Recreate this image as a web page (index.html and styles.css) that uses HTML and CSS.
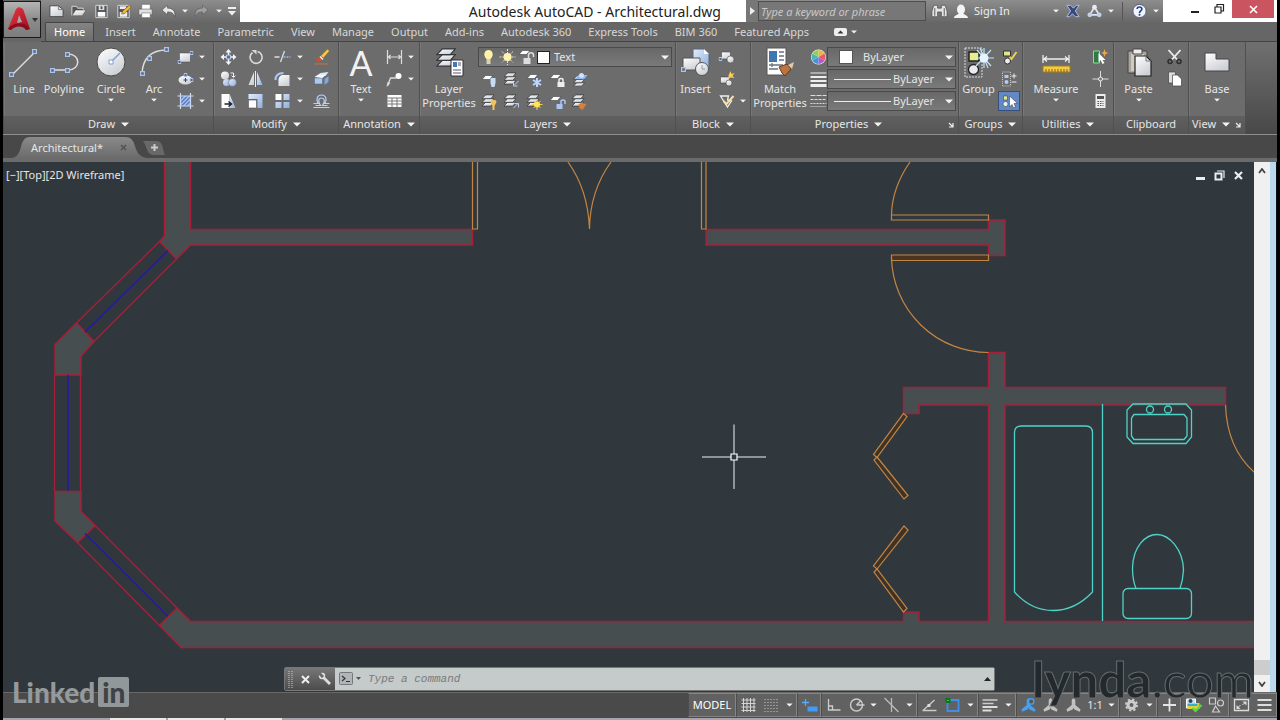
FILE: index.html
```html
<!DOCTYPE html>
<html lang="en">
<head>
<meta charset="utf-8">
<title>Autodesk AutoCAD - Architectural.dwg</title>
<link rel="stylesheet" href="styles.css">
</head>
<body>
<svg class="defs" aria-hidden="true">
  <defs>
    <linearGradient id="gw" x1="0" y1="0" x2="0.6" y2="1"><stop offset="0" stop-color="#fff"/><stop offset="1" stop-color="#cdd0d6"/></linearGradient>
    <linearGradient id="gb" x1="0" y1="0" x2="1" y2="1"><stop offset="0" stop-color="#e3edfb"/><stop offset="1" stop-color="#8eaede"/></linearGradient>
    <linearGradient id="gr" x1="0" y1="0" x2="1" y2="1"><stop offset="0" stop-color="#f0394a"/><stop offset="1" stop-color="#980d1c"/></linearGradient>
    <symbol id="caret" viewBox="0 0 8 5"><path d="M0 0.5h8L4 4.5z" fill="#f4f4f4"/></symbol>
    <symbol id="node" viewBox="0 0 4 4"><path d="M.5.5h3v3h-3z" fill="#5c6675" stroke="#a8c4f2"/></symbol>
    <symbol id="sheet" viewBox="0 0 12 5"><path d="M4 .5h7.500L8 4.500H.500z" fill="#fff" stroke="#3c3f44" stroke-width=".6"/></symbol>
    <symbol id="stack" viewBox="0 0 14 14"><g fill="url(#gw)" stroke="#34373c" stroke-width=".8"><path d="M4.500 9h9L10 13H.5z"/><path d="M4.500 5h9L10 9H.5z"/><path d="M4.500 1h9L10 5H.5z"/></g></symbol>
    <symbol id="scale" viewBox="0 0 18 18"><path d="M9 1l2 2v6l6 5-1 2.500-6-2.500-1-2-1 2-6 2.500L1 14l6-5V3z"/></symbol>
  </defs>
</svg>
<div class="app">
  <header class="top">
    <button class="app-menu" aria-label="Application menu">
      <svg width="34" height="30" viewBox="0 0 34 30"><path d="M3 24L11 4l3-2 4 2 7 20-4 1-3-5-5-1-5 2-2 4z" fill="url(#gr)"/><path d="M14 10l3 7-5 1z" fill="#a8a8a8"/><path d="M3 24c3-5 12-7 18-4l4 4-4 1c-4-5-11-4-15 0z" fill="#8c0c1a"/><path d="M27 13h6l-3 4z" fill="#333"/></svg>
    </button>
    <div class="titlebar">
      <div class="qat">
        <button aria-label="New"><svg class="i" viewBox="0 0 18 16"><path d="M2 2.500h9l5 4v7.500H2z" fill="url(#gw)" stroke="#444"/><path d="M11 2.500v4h5" fill="none" stroke="#777"/></svg></button>
        <button aria-label="Open"><svg class="i" viewBox="0 0 18 16"><path d="M2 13V3h5l1 2h6v3" fill="#555" stroke="#ddd"/><path d="M2 13l4-6h11l-4 6z" fill="url(#gw)" stroke="#444" stroke-width=".5"/></svg></button>
        <button aria-label="Save"><svg class="i" viewBox="0 0 18 16"><path d="M3 2h12v13H3z" fill="#52565c" stroke="#ddd"/><path d="M6 2h6v5H6z" fill="#ddd"/><path d="M5 9h8v5H5z" fill="#fff"/><path d="M8 3h2v3H8z" fill="#555"/></svg></button>
        <button aria-label="Save as"><svg class="i" viewBox="0 0 18 16"><path d="M3 2h12v13H3z" fill="#52565c" stroke="#ddd"/><path d="M5 3h7v3H5zM5 9h8v5H5z" fill="#eee"/><path d="M7 11l1-3 7-6 2 2-7 7z" fill="#f2b63c" stroke="#5b4312" stroke-width=".6"/></svg></button>
        <button aria-label="Plot"><svg class="i" viewBox="0 0 18 16"><path d="M5 1h9v6H5z" fill="#fff" stroke="#555" stroke-width=".5"/><path d="M2 6h14v6H2z" fill="#dfe1e4" stroke="#555" stroke-width=".6"/><path d="M5 10h9v5H5z" fill="#fff" stroke="#666" stroke-width=".6"/></svg></button>
        <button aria-label="Undo"><svg class="i" viewBox="0 0 18 16"><path d="M2 7l6-5v3c5 0 8 2 8 9-2-4-4-5-8-5v3z" fill="#e8e8e8" stroke="#444" stroke-width=".6"/></svg></button>
        <svg class="caret" viewBox="0 0 8 5"><use href="#caret"/></svg>
        <button aria-label="Redo"><svg class="i" viewBox="0 0 18 16"><path d="M16 7l-6-5v3c-5 0-8 2-8 9 2-4 4-5 8-5v3z" fill="#a0a0a0" stroke="#555" stroke-width=".6"/></svg></button>
        <svg class="caret" viewBox="0 0 8 5"><use href="#caret"/></svg>
        <button aria-label="Customize"><svg width="10" height="9" viewBox="0 0 10 9"><path d="M1 0h8v2H1zM1 4h8L5 8.500z" fill="#f0f0f0"/></svg></button>
      </div>
      <h1>Autodesk AutoCAD - Architectural.dwg</h1>
      <div class="info">
        <button class="expand" aria-label="Collapse search"><svg width="5" height="8" viewBox="0 0 5 8"><path d="M0 0l5 4-5 4z" fill="#eee"/></svg></button>
        <input class="search" type="text" placeholder="Type a keyword or phrase" aria-label="Search">
        <button aria-label="Find"><svg class="i" viewBox="0 0 18 16"><path d="M3 2h4v3h4V2h4l2 6v6h-6V9H7v5H1V8z" fill="#e4e4e4" stroke="#444" stroke-width=".7"/><path d="M4 5v8M14 5v8" stroke="#555"/></svg></button>
        <button class="signin"><svg width="16" height="15" viewBox="0 0 16 15"><ellipse cx="8" cy="5.500" rx="4" ry="5" fill="#f4f4f4"/><path d="M1 14c0-3 4-3 5-5h4c1 2 5 2 5 5z" fill="#f4f4f4"/></svg><span>Sign In</span></button>
        <svg class="caret" viewBox="0 0 8 5"><use href="#caret"/></svg>
        <button aria-label="Exchange"><svg class="i" viewBox="0 0 18 16"><path d="M3 2h4l3 3 3-3h3l-4 6 4 6h-4l-3-3-3 3H3l4-6z" fill="#35497f" stroke="#b4c4e6"/></svg></button>
        <button aria-label="Connect"><svg class="i" viewBox="0 0 18 16"><path d="M9 4l5 8H4z" fill="none" stroke="#dfe6f5" stroke-width="1.800"/><circle cx="9" cy="4" r="2.500" fill="#e6ecf8"/><circle cx="4" cy="12" r="2.500" fill="#c3d0ea"/><circle cx="14" cy="12" r="2.500" fill="#c3d0ea"/></svg></button>
        <svg class="caret" viewBox="0 0 8 5"><use href="#caret"/></svg>
        <span class="rule"></span>
        <button aria-label="Help"><svg class="i" viewBox="0 0 18 16"><circle cx="9" cy="8" r="7" fill="#f2f5fc" stroke="#515b74"/><path d="M6.500 6c0-3 5-3 5 0 0 2-2.500 1.800-2.500 4M9 11v2" fill="none" stroke="#26458f" stroke-width="1.800"/></svg></button>
        <svg class="caret" viewBox="0 0 8 5"><use href="#caret"/></svg>
      </div>
      <div class="window">
        <button aria-label="Minimize"><svg width="12" height="12" viewBox="0 0 12 12"><path d="M2 8h8v2H2z" fill="#222"/></svg></button>
        <button aria-label="Restore"><svg width="12" height="12" viewBox="0 0 12 12"><path d="M2 4h6v6H2zM4 4V1.500h6.500V8H8" fill="none" stroke="#222" stroke-width="1.200"/></svg></button>
        <button class="close" aria-label="Close"><svg width="9" height="9" viewBox="0 0 9 9"><path d="M1 1l7 7M8 1L1 8" stroke="#fff" stroke-width="1.600"/></svg></button>
      </div>
    </div>
    <nav class="tabs">
      <button class="on">Home</button><button>Insert</button><button>Annotate</button><button>Parametric</button><button>View</button><button>Manage</button><button>Output</button><button>Add-ins</button><button>Autodesk 360</button><button>Express Tools</button><button>BIM 360</button><button>Featured Apps</button>
      <button aria-label="Minimize ribbon" class="minrib"><svg width="24" height="8" viewBox="0 0 24 8"><rect width="13" height="8" rx="2" fill="#eee"/><path d="M3.500 5.500h6l-3-3z" fill="#333"/><path d="M17 2.500h6l-3 3z" fill="#eee"/></svg></button>
    </nav>
  </header>

  <div class="ribbon">
    <section class="panel draw">
      <div class="tools">
        <button class="big"><svg viewBox="0 0 32 32"><path d="M4 28L27 5" stroke="#ddd" stroke-width="1.500"/><use href="#node" x="1" y="25" width="5" height="5"/><use href="#node" x="24" y="2" width="5" height="5"/></svg>Line</button>
        <button class="big"><svg viewBox="0 0 32 32"><path d="M4 23h16c13 0 13-16 0-16" fill="none" stroke="#ddd" stroke-width="1.500"/><use href="#node" x="2" y="21" width="5" height="5"/><use href="#node" x="17" y="21" width="5" height="5"/><use href="#node" x="17" y="5" width="5" height="5"/></svg>Polyline</button>
        <button class="big"><svg viewBox="0 0 32 32"><circle cx="16" cy="15" r="14" fill="url(#gw)" stroke="#484848"/><path d="M16 15l9-9" stroke="#7e9ed8" stroke-width="1.500"/><path d="M14 13h4v4h-4z" fill="#fff" stroke="#7e9ed8"/></svg>Circle<svg class="caret" viewBox="0 0 8 5"><use href="#caret"/></svg></button>
        <button class="big"><svg viewBox="0 0 32 32"><path d="M4 27Q5 3 29 3" fill="none" stroke="#ddd" stroke-width="1.500"/><use href="#node" x="2" y="24" width="5" height="5"/><use href="#node" x="9" y="9" width="5" height="5"/><use href="#node" x="26" y="0" width="5" height="5"/></svg>Arc<svg class="caret" viewBox="0 0 8 5"><use href="#caret"/></svg></button>
        <div class="small two">
          <button aria-label="Rectangle"><svg class="i" viewBox="0 0 16 16"><path d="M2 4h11v9H2z" fill="url(#gw)" stroke="#444" stroke-width=".5"/><use href="#node" x="0" y="11" width="4" height="4"/><use href="#node" x="12" y="2" width="4" height="4"/></svg></button><svg class="caret" viewBox="0 0 8 5"><use href="#caret"/></svg>
          <button aria-label="Ellipse"><svg class="i" viewBox="0 0 16 16"><ellipse cx="8" cy="9" rx="7" ry="4.500" fill="url(#gw)"/><path d="M8 7v4M6 9h4" stroke="#444"/><use href="#node" x="6" y="2" width="4" height="4"/><use href="#node" x="12" y="7" width="4" height="4"/></svg></button><svg class="caret" viewBox="0 0 8 5"><use href="#caret"/></svg>
          <button aria-label="Hatch"><svg class="i" viewBox="0 0 16 16"><path d="M3 3h10v10H3z" fill="#6285c8"/><path d="M3 8l5-5M3 12l9-9M6 13l7-7M10 13l3-3" stroke="#dfe9ff"/><path d="M3 0v16M13 0v16M0 3h16M0 13h16" stroke="#c9d8f6" stroke-width="1.200"/></svg></button><svg class="caret" viewBox="0 0 8 5"><use href="#caret"/></svg>
        </div>
      </div>
      <footer><span>Draw</span><svg class="caret" viewBox="0 0 8 5"><use href="#caret"/></svg></footer>
    </section>

    <section class="panel modify">
      <div class="tools">
        <div class="small five">
          <button aria-label="Move"><svg class="i" viewBox="0 0 16 16"><path d="M8 0l3 3.500H5zM8 16l3-3.500H5zM0 8l3.500-3v6zM16 8l-3.500-3v6z" fill="#f2f5fa"/><path d="M8 3v10M3 8h10" stroke="#f2f5fa" stroke-width="1.500"/><path d="M6 6h4v4H6z" fill="#5d6e90" stroke="#b8cdf2"/></svg></button>
          <button aria-label="Rotate"><svg class="i" viewBox="0 0 16 16"><path d="M5 3.500a6 6 0 1 0 5-1" fill="none" stroke="#d8d8d8" stroke-width="1.600"/><path d="M4 1h5v4.500z" fill="#d8d8d8"/></svg></button>
          <button aria-label="Trim"><svg class="i" viewBox="0 0 16 16"><path d="M0 8h5M6 13l4-11" stroke="#ddd" stroke-width="1.300"/><path d="M9 8h7" stroke="#90b4f0" stroke-width="1.300" stroke-dasharray="2 1"/></svg></button><svg class="caret" viewBox="0 0 8 5"><use href="#caret"/></svg>
          <button aria-label="Erase"><svg class="i" viewBox="0 0 16 16"><path d="M14 0l2 2-6 7-3-2z" fill="#f6c64c" stroke="#7b5a12" stroke-width=".5"/><path d="M2 13c1-3 2-5 4-5l2.500 2.500c0 2-2 3-6.500 2.500z" fill="#c9502a"/><path d="M6.500 7.500l3 3" stroke="#eee" stroke-width="1.500"/><path d="M1 15h14" stroke="#b87558"/></svg></button>
          <button aria-label="Copy"><svg class="i" viewBox="0 0 16 16"><circle cx="4.500" cy="4.500" r="4" fill="url(#gw)"/><circle cx="6" cy="11.500" r="3.500" fill="url(#gb)"/><circle cx="12" cy="11.500" r="4" fill="url(#gb)" stroke="#555" stroke-width=".5"/><path d="M10 2h3v4M11 4.500l2 2 2-2" fill="none" stroke="#eee"/></svg></button>
          <button aria-label="Mirror"><svg class="i" viewBox="0 0 16 16"><path d="M6.500 1v13H1z" fill="url(#gw)"/><path d="M9.500 1v13H15z" fill="url(#gb)"/><path d="M8 0v16" stroke="#eee"/></svg></button>
          <button aria-label="Fillet"><svg class="i" viewBox="0 0 16 16"><path d="M4 15V9c0-3 2-5 5-5h6v11z" fill="url(#gw)"/><path d="M1 9c0-5 3-7 8-7" fill="none" stroke="#a9c6fa" stroke-width="2"/></svg></button><svg class="caret" viewBox="0 0 8 5"><use href="#caret"/></svg>
          <button aria-label="Explode"><svg class="i" viewBox="0 0 16 16"><path d="M1 7h8v6H1z" fill="#a9c8f2" stroke="#566" stroke-width=".5"/><path d="M4 4l3-2 8-1-3 4z" fill="#dceafc"/><path d="M11 8l4-3v6l-4 3z" fill="#7ea5df"/><path d="M1 6l3-2h8l-3 3z" fill="#f4f8ff"/></svg></button>
          <button aria-label="Stretch"><svg class="i" viewBox="0 0 16 16"><path d="M1 1h8v14H1z" fill="#fff"/><path d="M9 1l6 14H9z" fill="url(#gb)"/><path d="M4 11h6M8 8.500l3 2.500-3 2.500" fill="none" stroke="#222" stroke-width="1.500"/></svg></button>
          <button aria-label="Scale"><svg class="i" viewBox="0 0 16 16"><path d="M1 1h14v14H10V6H1z" fill="url(#gb)"/><path d="M1 7h8v8H1z" fill="#fff" stroke="#555" stroke-width=".6"/></svg></button>
          <button aria-label="Array"><svg class="i" viewBox="0 0 16 16"><path d="M1 1h6v6H1z" fill="#fff"/><path d="M9 1h6v6H9zM1 9h6v6H1zM9 9h6v6H9z" fill="url(#gb)"/></svg></button><svg class="caret" viewBox="0 0 8 5"><use href="#caret"/></svg>
          <button aria-label="Offset"><svg class="i" viewBox="0 0 16 16"><path d="M0 14.500h16M0 10.500h4.500C2 6 4 2 8 2s6 4 3.500 8.500H16M2 12.500h5C4 8 5 5 8 5s4 3 1 7.500h5" fill="none" stroke="#b9d0f8" stroke-width="1.200"/></svg></button>
        </div>
      </div>
      <footer><span>Modify</span><svg class="caret" viewBox="0 0 8 5"><use href="#caret"/></svg></footer>
    </section>

    <section class="panel annotation">
      <div class="tools">
        <button class="big"><span class="glyph">A</span>Text<svg class="caret" viewBox="0 0 8 5"><use href="#caret"/></svg></button>
        <div class="small two">
          <button aria-label="Dimension"><svg class="i" viewBox="0 0 16 16"><path d="M1 1v14M15 1v14M2 8h12M4 6L2 8l2 2M12 6l2 2-2 2" fill="none" stroke="#ddd" stroke-width="1.200"/></svg></button><svg class="caret" viewBox="0 0 8 5"><use href="#caret"/></svg>
          <button aria-label="Leader"><svg class="i" viewBox="0 0 16 16"><path d="M1 15l3-8h6" fill="none" stroke="#ddd" stroke-width="1.300"/><path d="M0 16l1-5 3 1z" fill="#ddd"/><circle cx="12" cy="5" r="3" fill="#fff"/></svg></button><svg class="caret" viewBox="0 0 8 5"><use href="#caret"/></svg>
          <button aria-label="Table"><svg class="i" viewBox="0 0 16 16"><path d="M1 2h14v12H1z" fill="#fff"/><path d="M1 5h14M1 8h14M1 11h14M5.500 5v9M10.500 5v9" stroke="#777"/></svg></button>
        </div>
      </div>
      <footer><span>Annotation</span><svg class="caret" viewBox="0 0 8 5"><use href="#caret"/></svg></footer>
    </section>

    <section class="panel layers">
      <div class="tools">
        <button class="big"><svg viewBox="0 0 32 32"><use href="#stack" x="3" y="0" width="20" height="21"/><path d="M18 13h12v16H18z" fill="#fff" stroke="#333"/><path d="M20 15h4v5h-4z" fill="#4479b5"/><path d="M25 16h3M25 18h3M20 23h8M20 26h8" stroke="#557"/></svg>Layer<br>Properties</button>
        <div class="stackcol">
          <div class="combo wide">
            <svg class="i" viewBox="0 0 16 16"><path d="M6 10C2 6 4 1 8 1s6 5 2 9z" fill="#fff3a5"/><path d="M6 10h4v5H6z" fill="#d8d0b8"/></svg>
            <svg class="i" viewBox="0 0 16 16"><path d="M8 0v16M0 8h16M2.500 2.500l11 11M13.500 2.500l-11 11" stroke="#e8e2c0" stroke-dasharray="2 1"/><circle cx="8" cy="8" r="4" fill="#fff3b0"/></svg>
            <svg class="i" viewBox="0 0 16 16"><use href="#sheet" x="0" y="1" width="12" height="5"/><path d="M5 9h7v6H5z" fill="#ddd"/><path d="M10 9V6c0-3 5-3 5 0v2" fill="none" stroke="#ddd" stroke-width="1.500"/></svg>
            <span class="swatch"></span>
            <select aria-label="Layer"><option>Text</option></select><svg class="caret" viewBox="0 0 8 5"><use href="#caret"/></svg>
          </div>
          <div class="small layericons">
            <button aria-label="Layer off"><svg class="i" viewBox="0 0 16 16"><use href="#sheet" x="0" y="3" width="12" height="5"/><path d="M9 6h5v5l-1 4h-3l-1-4z" fill="#c7dbf7"/></svg></button>
            <button aria-label="Isolate"><svg class="i" viewBox="0 0 16 16"><use href="#stack" x="0" y="0" width="13" height="13"/><path d="M15 9l-4 4M10 10v4h4" stroke="#b7d0f8" fill="none"/></svg></button>
            <button aria-label="Freeze"><svg class="i" viewBox="0 0 16 16"><use href="#sheet" x="0" y="2" width="12" height="5"/><path d="M10.500 6v9M6.500 8l8 5M14.500 8l-8 5" stroke="#b9d7ff" stroke-width="2"/></svg></button>
            <button aria-label="Lock"><svg class="i" viewBox="0 0 16 16"><use href="#sheet" x="0" y="2" width="12" height="5"/><path d="M8 10h7v5H8z" fill="#eee"/><path d="M9.500 10V8c0-2 4-2 4 0v2" fill="none" stroke="#eee" stroke-width="1.500"/></svg></button>
            <button aria-label="Make current"><svg class="i" viewBox="0 0 16 16"><use href="#stack" x="1" y="3" width="13" height="12"/><path d="M4 7h9l3-4H7z" fill="#8fb7ed"/><circle cx="10" cy="3.500" r="2.500" fill="#cfe2ff"/></svg></button>
            <button aria-label="Layers on"><svg class="i" viewBox="0 0 16 16"><use href="#stack" x="0" y="0" width="13" height="13"/><path d="M9 8c0-3 6-3 6 0l-2 4v4h-2v-4z" fill="#f3c35a"/></svg></button>
            <button aria-label="Unisolate"><svg class="i" viewBox="0 0 16 16"><use href="#stack" x="0" y="0" width="13" height="13"/><path d="M10 14l4-4M11 9.500h4v4" stroke="#b7d0f8" fill="none"/></svg></button>
            <button aria-label="Thaw"><svg class="i" viewBox="0 0 16 16"><use href="#stack" x="0" y="0" width="13" height="13"/><path d="M10.500 5v11M5 10.500h11M7 7l7 7M14 7l-7 7" stroke="#f6d14a"/><circle cx="10.500" cy="10.500" r="3" fill="#ffe25e"/></svg></button>
            <button aria-label="Unlock"><svg class="i" viewBox="0 0 16 16"><use href="#sheet" x="0" y="2" width="12" height="5"/><path d="M7 10h6v5H7z" fill="#a9c6f3"/><path d="M11.500 10V7.500c0-2 4-2 4 0V10" fill="none" stroke="#a9c6f3" stroke-width="1.500"/></svg></button>
            <button aria-label="Match layer"><svg class="i" viewBox="0 0 16 16"><use href="#stack" x="0" y="0" width="13" height="13"/><path d="M7 10l3-1 5 1-4 6-3-2z" fill="#d8803a"/></svg></button>
          </div>
        </div>
      </div>
      <footer><span>Layers</span><svg class="caret" viewBox="0 0 8 5"><use href="#caret"/></svg></footer>
    </section>

    <section class="panel block">
      <div class="tools">
        <button class="big"><svg viewBox="0 0 32 32"><path d="M13 2h11l5 5v15H13z" fill="url(#gb)" stroke="#567"/><path d="M24 2v5h5" fill="#fff"/><path d="M3 11h17v12H3z" fill="url(#gw)" stroke="#555"/><circle cx="22" cy="22" r="6.500" fill="url(#gw)" stroke="#555"/><path d="M22 18v4h3" fill="none" stroke="#999"/><use href="#node" x="1" y="20" width="5" height="5"/></svg>Insert</button>
        <div class="small two">
          <button aria-label="Create block"><svg class="i" viewBox="0 0 16 16"><path d="M3 3h9v7H3z" fill="url(#gw)" stroke="#444" stroke-width=".6"/><circle cx="12" cy="10.500" r="3.500" fill="url(#gw)" stroke="#444" stroke-width=".6"/><use href="#node" x="0" y="8" width="4" height="4"/></svg></button><span></span>
          <button aria-label="Edit block"><svg class="i" viewBox="0 0 16 16"><path d="M2 6h9v6H2z" fill="url(#gw)" stroke="#444" stroke-width=".6"/><circle cx="10.500" cy="12" r="3" fill="url(#gw)" stroke="#444" stroke-width=".6"/><path d="M12 0l1 3 3-1-2 3 2 2-4-.5L10 8V4.500z" fill="#f8cf57"/></svg></button><span></span>
          <button aria-label="Edit attributes"><svg class="i" viewBox="0 0 16 16"><path d="M2 3h8l-1 4 4 1-4 6z" fill="none" stroke="#eee" stroke-width="1.300"/><path d="M5 8l3 3 7-8" fill="none" stroke="#f7e1a5" stroke-width="2"/></svg></button><svg class="caret" viewBox="0 0 8 5"><use href="#caret"/></svg>
        </div>
      </div>
      <footer><span>Block</span><svg class="caret" viewBox="0 0 8 5"><use href="#caret"/></svg></footer>
    </section>

    <section class="panel properties">
      <div class="tools">
        <button class="big"><svg viewBox="0 0 32 32"><path d="M3 1h19v27H3z" fill="#fff" stroke="#555"/><path d="M5 4h8v11H5z" fill="#3e78ad"/><path d="M15 5h5M15 9h5M15 13h5M5 18h14M5 22h9M8 16v4" stroke="#68727e" stroke-width="1.300"/><path d="M15 20l8-3 4 5-6 7-3-3z" fill="#bd7440" stroke="#63391b"/><path d="M24 18l6-3-2 7z" fill="#e2c9a8"/></svg>Match<br>Properties</button>
        <div class="small proprows">
          <svg class="i" viewBox="0 0 16 16"><circle cx="8" cy="8" r="7.500" fill="#fff"/><path d="M8 8V1a7 7 0 0 1 6 3.500z" fill="#f0b04a"/><path d="M8 8l6-3.500a7 7 0 0 1 0 7z" fill="#e65a64"/><path d="M8 8l6 3.500A7 7 0 0 1 8 15z" fill="#b65ac6"/><path d="M8 8v7a7 7 0 0 1-6-3.500z" fill="#4a8ce0"/><path d="M8 8l-6 3.500a7 7 0 0 1 0-7z" fill="#48b9b2"/><path d="M8 8L2 4.500A7 7 0 0 1 8 1z" fill="#9bcd55"/></svg>
          <div class="combo"><span class="swatch"></span><select aria-label="Color"><option>ByLayer</option></select><svg class="caret" viewBox="0 0 8 5"><use href="#caret"/></svg></div>
          <svg class="i" viewBox="0 0 16 16"><path d="M0 2h16" stroke="#eee"/><path d="M0 6h16" stroke="#eee" stroke-width="2"/><path d="M0 10h16" stroke="#eee" stroke-width="2"/><path d="M0 14.500h16" stroke="#eee" stroke-width="3"/></svg>
          <div class="combo"><span class="stroke"></span><select aria-label="Lineweight"><option>ByLayer</option></select><svg class="caret" viewBox="0 0 8 5"><use href="#caret"/></svg></div>
          <svg class="i" viewBox="0 0 16 16"><path d="M0 2.500h16" stroke="#ddd" stroke-dasharray="5 1"/><path d="M0 6.500h16" stroke="#ddd" stroke-dasharray="3 1"/><path d="M0 10.500h16" stroke="#ddd" stroke-dasharray="2 1"/><path d="M0 13.500h16" stroke="#ddd" stroke-dasharray="1 1"/></svg>
          <div class="combo"><span class="stroke"></span><select aria-label="Linetype"><option>ByLayer</option></select><svg class="caret" viewBox="0 0 8 5"><use href="#caret"/></svg></div>
        </div>
      </div>
      <footer><span>Properties</span><svg class="caret" viewBox="0 0 8 5"><use href="#caret"/></svg><svg class="launch" viewBox="0 0 6 6"><path d="M1 1l4 4M5 1v4H1" fill="none" stroke="#eee" stroke-width="1.200"/></svg></footer>
    </section>

    <section class="panel groups">
      <div class="tools">
        <button class="big"><svg viewBox="0 0 32 32"><path d="M2 1h17v29H2z" fill="none" stroke="#ddd" stroke-dasharray="2 1"/><path d="M6 5h10v9H6z" fill="#e9ef88" stroke="#222" stroke-width="1.500"/><circle cx="10.500" cy="22.500" r="5" fill="#e8ecf1" stroke="#222" stroke-width="1.300"/><path d="M21 1v20M11 11h20M14 3l14 16M28 3L13 19M17 1l8 20" stroke="#bfe4ff" stroke-width="1.200"/><circle cx="21" cy="11" r="4.500" fill="#e4f5ff"/></svg>Group</button>
        <div class="small one">
          <button aria-label="Ungroup"><svg class="i" viewBox="0 0 16 16"><path d="M2 2h7v5H2z" fill="#e1e68a" stroke="#333"/><circle cx="6" cy="12" r="3" fill="#eee" stroke="#333"/><path d="M8 8l2 2 5-7" stroke="#e9cf5b" stroke-width="2" fill="none"/></svg></button>
          <button aria-label="Group edit"><svg class="i" viewBox="0 0 16 16"><path d="M1 1h8v14H1z" fill="none" stroke="#ccc" stroke-dasharray="1 1"/><path d="M3 4h4v3H3z" fill="#b4ccf0"/><circle cx="5" cy="11" r="2" fill="#b4ccf0"/><path d="M10 5h5M12.500 2.500v5M10 11h5" stroke="#eee"/></svg></button>
          <button class="active" aria-label="Group selection"><svg class="i" viewBox="0 0 16 16"><path d="M2 3h4v4H2z" fill="#dfe88e" stroke="#333" stroke-width=".5"/><circle cx="4" cy="11" r="2.500" fill="#eee" stroke="#333" stroke-width=".5"/><path d="M8 3v11l2.500-2.500L12 15l2-1-1.500-3.500H16z" fill="#fff" stroke="#333" stroke-width=".5"/></svg></button>
        </div>
      </div>
      <footer><span>Groups</span><svg class="caret" viewBox="0 0 8 5"><use href="#caret"/></svg></footer>
    </section>

    <section class="panel utilities">
      <div class="tools">
        <button class="big"><svg viewBox="0 0 32 32"><path d="M3 8v8M29 8v8M3 12h26M7 9.500L4 12l3 2.500M25 9.500l3 2.500-3 2.500" fill="none" stroke="#eee" stroke-width="1.300"/><path d="M3 19h27v6H3z" fill="#f4c943" stroke="#a37f1c"/><path d="M6 22v3M9 22v3M12 22v3M15 22v3M18 22v3M21 22v3M24 22v3M27 22v3" stroke="#876414"/></svg>Measure<svg class="caret" viewBox="0 0 8 5"><use href="#caret"/></svg></button>
        <div class="small one">
          <button aria-label="Quick select"><svg class="i" viewBox="0 0 16 16"><path d="M1 2h6v12H1z" fill="#2f7a48" stroke="#93e082"/><path d="M6 4v9l2-2 2 4 2-1-2-3h3z" fill="#fff"/><path d="M12 0l1 3 3 1-3 1-1 3-1-3-2-1 2-1z" fill="#f0a93c"/></svg></button>
          <button aria-label="ID point"><svg class="i" viewBox="0 0 16 16"><path d="M8 0v16M0 8h16" stroke="#ddd"/><circle cx="8" cy="8" r="2" fill="#777" stroke="#eee"/></svg></button>
          <button aria-label="Calculator"><svg class="i" viewBox="0 0 16 16"><path d="M3 1h10v14H3z" fill="#eee"/><path d="M4.500 3h7v3h-7z" fill="#555"/><path d="M5 8.500h6M5 10.500h6M5 12.500h6" stroke="#555" stroke-dasharray="1.500 1"/></svg></button>
        </div>
      </div>
      <footer><span>Utilities</span><svg class="caret" viewBox="0 0 8 5"><use href="#caret"/></svg></footer>
    </section>

    <section class="panel clipboard">
      <div class="tools">
        <button class="big"><svg viewBox="0 0 32 32"><path d="M5 4h19v22H5z" fill="#aaa49b" stroke="#444"/><path d="M8 7h13v17H8z" fill="#cfcac2"/><path d="M10 2h9v5h-9z" fill="#eee" stroke="#444"/><path d="M12 9h11l5 5v15H12z" fill="url(#gw)" stroke="#222" stroke-width="1.200"/><path d="M23 9v5h5" fill="none" stroke="#777"/></svg>Paste<svg class="caret" viewBox="0 0 8 5"><use href="#caret"/></svg></button>
        <div class="small one">
          <button aria-label="Cut"><svg class="i" viewBox="0 0 16 16"><path d="M2 1l9 10M14 1L5 11" stroke="#eee" stroke-width="1.800"/><circle cx="3.500" cy="12.500" r="2" fill="none" stroke="#2d2d2d" stroke-width="1.500"/><circle cx="12.500" cy="12.500" r="2" fill="none" stroke="#2d2d2d" stroke-width="1.500"/></svg></button>
          <button aria-label="Copy clip"><svg class="i" viewBox="0 0 16 16"><path d="M2 1h7v11H2z" fill="#ddd" stroke="#444" stroke-width=".7"/><path d="M6 4h5l4 4v7H6z" fill="#fff" stroke="#444" stroke-width=".7"/></svg></button>
        </div>
      </div>
      <footer><span>Clipboard</span></footer>
    </section>

    <section class="panel view">
      <div class="tools">
        <button class="big"><svg viewBox="0 0 32 32"><path d="M4 6h11v6h13v12H4z" fill="url(#gw)" stroke="#444"/></svg>Base<svg class="caret" viewBox="0 0 8 5"><use href="#caret"/></svg></button>
      </div>
      <footer><span>View</span><svg class="caret" viewBox="0 0 8 5"><use href="#caret"/></svg><svg class="launch" viewBox="0 0 6 6"><path d="M1 1l4 4M5 1v4H1" fill="none" stroke="#eee" stroke-width="1.200"/></svg></footer>
    </section>
  </div>

  <div class="files">
    <svg class="tabshape" viewBox="0 0 176 22" aria-hidden="true"><defs><linearGradient id="gt" x1="0" y1="0" x2="0" y2="1"><stop offset="0" stop-color="#8a8a8a"/><stop offset="1" stop-color="#6b6b6b"/></linearGradient></defs><path d="M17 22C29 20 23 2 34 1h96c14 0 6 19 22 21z" fill="url(#gt)"/><path d="M148 5h12c9 0 7 8 10 14h-10c-9 0-7-7-12-14z" fill="#686868"/></svg>
    <button class="file">Architectural*</button>
    <button class="fclose" aria-label="Close drawing"><svg width="7" height="7" viewBox="0 0 7 7"><path d="M1 1l5 5M6 1L1 6" stroke="#525252" stroke-width="1.500"/></svg></button>
    <button class="fadd" aria-label="New drawing"><svg width="7" height="7" viewBox="0 0 7 7"><path d="M3.500 0v7M0 3.500h7" stroke="#ccc" stroke-width="2"/></svg></button>
  </div>

  <main class="work">
    <div class="canvas">
      <svg class="plan" viewBox="3 162 1251 530" preserveAspectRatio="xMinYMin slice" role="img" aria-label="Floor plan">
        <g fill="#464e50" stroke="#a91d38" stroke-width="1.500">
          <path d="M164.500 158V236L159.500 241.500 176.500 259 190.500 245H472.500V229.500H190.500V158z"/>
          <path d="M76.500 323L55 344.500V375H81V356L94 341.500z"/>
          <path d="M55 491.500H81V511.500L95 525.500 77.500 542.500 55 521z"/>
          <path d="M706 229.500H988.500V220H1005V255.500H988.500V245H706z"/>
          <path d="M177 608L190.500 621.500H903.500V612H919V621.500H988.500V405H919V413.500H903.500V387.500H988.500V352.500H1005V387.500H1225.500V405H1005V621.500H1260V647.500H181L159.500 625.500z"/>
        </g>
        <path d="M159.500 241.500L76.500 323M176.500 259L94 341.500M54.500 375V491M80.500 375V491M95 525.500L177 608M77.500 542.500L159.500 625.500" stroke="#a91d38" stroke-width="1.300"/>
        <path d="M168 250.500L85 332M68 375V491M85 533.500L168 616.500" stroke="#2419a8" stroke-width="1.500"/>
        <g fill="none" stroke="#c38544" stroke-width="1.200">
          <path d="M472.500 160H477.500V229H472.500zM701.500 160H706V229H701.500z"/>
          <path d="M568 162Q588 190 589.500 229Q590 191 611 162"/>
          <path d="M891.500 215H988.500V220H891.500zM891.500 215Q892 188 910 162"/>
          <path d="M891.500 255H988.500V260.500H891.500z" fill="#4d3321"/><path d="M891.500 258A97 97 0 0 0 988.500 352.500"/>
          <path d="M903.500 413.500L907 416.500 877 457.500 873.500 454.500zM877 457L874 460 904 499 908 495.500zM904 526L908 530 877 569 873.500 566zM877 569L874 572 903.500 612 907 608.500z" fill="#403325"/>
          <path d="M1225.500 405Q1227 448 1254 472"/>
        </g>
        <g fill="none" stroke="#4fd3c8" stroke-width="1.300">
          <path d="M1014.500 433Q1014.500 426 1021 426H1086Q1092.500 426 1092.500 433V592Q1075 610.500 1053 610.500T1014.500 592zM1102.500 404V621"/>
          <path d="M1133 404H1186L1191.500 410V437L1186 443.500H1133L1127 437V410zM1134 414.500H1184L1187 418V436L1184 439.500H1134L1131.500 436V418z"/>
          <circle cx="1150" cy="409.500" r="3.500"/><circle cx="1168" cy="409.500" r="3.500"/>
          <rect x="1123" y="588.500" width="68.500" height="30" rx="5"/>
          <path d="M1136 588.500Q1132.500 580 1132.500 568C1133 547 1145 534.500 1157 534.500S1183 549 1183.500 570Q1183 580 1180 588.500"/>
        </g>
        <path d="M702 457H731M737 457H766M734 424.500V454M734 460V489" stroke="#f0f0f0"/><path d="M731 454h6v6h-6z" fill="none" stroke="#fff" stroke-width="1.200"/>
      </svg>
      <div class="viewlabel"><button>[−]</button><button>[Top]</button><button>[2D Wireframe]</button></div>
      <div class="viewbtns">
        <button aria-label="Minimize view"><svg width="11" height="11" viewBox="0 0 11 11"><path d="M1 7h9v3H1z" fill="#e8eef4"/></svg></button>
        <button aria-label="Restore view"><svg width="11" height="11" viewBox="0 0 11 11"><path d="M1.500 3.500h6v6h-6z" fill="none" stroke="#e8eef4" stroke-width="2"/><path d="M3 1h7v7" fill="none" stroke="#e8eef4" stroke-width="1.200"/></svg></button>
        <button aria-label="Close view"><svg width="11" height="11" viewBox="0 0 11 11"><path d="M2 2l7 7M9 2L2 9" stroke="#e8eef4" stroke-width="2.200"/></svg></button>
      </div>
      <div class="command">
        <div class="cmdtools">
          <svg width="5" height="17" viewBox="0 0 5 17"><path d="M1 0v17M4 0v17" stroke="#ccc" stroke-dasharray="1 1"/></svg>
          <button aria-label="Close command line"><svg width="9" height="9" viewBox="0 0 9 9"><path d="M1 1l7 7M8 1L1 8" stroke="#eee" stroke-width="2"/></svg></button>
          <button aria-label="Customize command line"><svg width="14" height="14" viewBox="0 0 14 14"><path d="M3 1l3 3-2 2-3-3C0 6 3 8 5 7l6 6 2-2-6-6C8 2 6 0 3 1z" fill="#ddd"/></svg></button>
        </div>
        <label class="cmdfield">
          <svg width="23" height="14" viewBox="0 0 23 14"><rect x=".5" y=".5" width="13" height="12" rx="1" fill="#b0b5b7" stroke="#777"/><path d="M3 4l3 2.500L3 9M7 9.500h4" fill="none" stroke="#333" stroke-width="1.200"/><path d="M17 5h5l-2.500 3z" fill="#555"/></svg>
          <input type="text" placeholder="Type a command" aria-label="Command">
          <svg width="7" height="4" viewBox="0 0 7 4"><path d="M0 4h7L3.500 0z" fill="#222"/></svg>
        </label>
      </div>
      <div class="linkedin"><span>Linked</span><b>in</b></div>
      <div class="lynda"><b>lynda</b><span>.com</span></div>
    </div>
    <div class="scroll">
      <button aria-label="Scroll up"><svg width="8" height="6" viewBox="0 0 8 6"><path d="M1 5l3-4 3 4" fill="none" stroke="#444" stroke-width="1.800"/></svg></button>
      <div class="track"><div class="thumb"></div></div>
      <button aria-label="Scroll down"><svg width="8" height="6" viewBox="0 0 8 6"><path d="M1 1l3 4 3-4" fill="none" stroke="#444" stroke-width="1.800"/></svg></button>
    </div>
    <div class="edge"></div>
  </main>

  <div class="status">
    <div class="grp model"><button>MODEL</button></div>
    <div class="grp w60">
      <button aria-label="Grid"><svg class="i" viewBox="0 0 16 16"><path d="M3 1v14M6.500 1v14M10 1v14M13.500 1v14M1 3h14M1 6.500h14M1 10h14M1 13.500h14" stroke="#d5d5d5"/></svg></button>
      <button aria-label="Snap"><svg class="i" viewBox="0 0 16 16"><path d="M1 2.500h14M1 5.500h14M1 8.500h14M1 11.500h14M1 14.500h14" stroke="#ccc" stroke-dasharray="1 2"/></svg></button>
      <svg class="caret" viewBox="0 0 8 5"><use href="#caret"/></svg>
    </div>
    <div class="grp w24"><button aria-label="Dynamic input"><svg class="i" viewBox="0 0 16 16"><path d="M4 2v7M.5 5.500h7" stroke="#58adf8" stroke-width="1.300"/><path d="M6 9.500h10v5H6z" fill="#3f9df5"/></svg></button></div>
    <div class="grp w96">
      <button aria-label="Ortho"><svg class="i" viewBox="0 0 16 16"><path d="M3 2v11h12M3 9h4v4" fill="none" stroke="#ccc" stroke-width="1.300"/></svg></button>
      <button aria-label="Polar"><svg class="i" viewBox="0 0 16 16"><circle cx="8" cy="8" r="6" fill="none" stroke="#ccc" stroke-width="1.400"/><path d="M8 8h8M8 8l4-4" stroke="#ccc" stroke-width="1.400"/></svg></button>
      <svg class="caret" viewBox="0 0 8 5"><use href="#caret"/></svg>
      <button aria-label="Isodraft"><svg class="i" viewBox="0 0 16 16"><path d="M1 1l14 14M8 1v14" stroke="#bbb" stroke-width="1.300"/></svg></button>
      <svg class="caret" viewBox="0 0 8 5"><use href="#caret"/></svg>
    </div>
    <div class="grp w60">
      <button aria-label="Object snap tracking"><svg class="i" viewBox="0 0 16 16"><path d="M1 13.500h14M2 13L13 3" stroke="#ccc" stroke-width="1.300"/><path d="M6 7h3v3H6z" fill="#ddd"/></svg></button>
      <button aria-label="Object snap"><svg class="i" viewBox="0 0 16 16"><path d="M3 3h11v11H3z" fill="none" stroke="#3f8fe8" stroke-width="1.800"/><path d="M1 1h5v5H1z" fill="#087a1c"/><path d="M3 3h1v1H3z" fill="#9fe09f"/></svg></button>
      <svg class="caret" viewBox="0 0 8 5"><use href="#caret"/></svg>
    </div>
    <div class="grp w38"><button aria-label="Lineweight"><svg class="i" viewBox="0 0 16 16"><path d="M0 3h15M0 6.500h11" stroke="#ccc" stroke-width="1.500"/><path d="M0 10h15M0 13.500h9" stroke="#ddd" stroke-width="2"/></svg></button><svg class="caret" viewBox="0 0 8 5"><use href="#caret"/></svg></div>
    <div class="grp w102">
      <button aria-label="Annotation visibility"><svg class="i" viewBox="0 0 18 18" fill="#43a0f5"><use href="#scale"/><circle cx="12" cy="5" r="3" fill="#555" stroke="#43a0f5" stroke-width="1.500"/></svg></button>
      <button aria-label="Autoscale"><svg class="i" viewBox="0 0 18 18" fill="#c2c2c2"><use href="#scale"/><path d="M15 1l-4 5h3l-2 4 5-5h-3l3-4z"/></svg></button>
      <button aria-label="Annotation scale icon"><svg class="i" viewBox="0 0 18 18" fill="#c2c2c2"><use href="#scale"/></svg></button>
      <button>1:1</button><svg class="caret" viewBox="0 0 8 5"><use href="#caret"/></svg>
    </div>
    <div class="grp w38"><button aria-label="Workspace"><svg class="i" viewBox="0 0 16 16"><circle cx="8" cy="8" r="3.500" fill="none" stroke="#ccc" stroke-width="3"/><circle cx="8" cy="8" r="5.500" fill="none" stroke="#ccc" stroke-width="2" stroke-dasharray="2.300 2"/></svg></button><svg class="caret" viewBox="0 0 8 5"><use href="#caret"/></svg></div>
    <div class="grp w24"><button aria-label="Annotation monitor"><svg class="i" viewBox="0 0 16 16"><path d="M8 1.500v13M1.500 8h13" stroke="#e4e4e4" stroke-width="1.800"/></svg></button></div>
    <div class="grp w48">
      <button aria-label="Hardware"><svg class="i" viewBox="0 0 16 16"><path d="M1 2h9v9H1z" fill="#bfe0f5" stroke="#fff"/><circle cx="5" cy="4" r="2" fill="#345" /><path d="M2 6h12v6H2z" fill="#e8cd3a"/><path d="M2 8h10" stroke="#35b0c4" stroke-width="2"/><path d="M7 11l3 3 6-6" fill="none" stroke="#54dc48" stroke-width="2.200"/></svg></button>
      <button aria-label="Isolate objects"><svg class="i" viewBox="0 0 16 16"><path d="M1 1h6v6H1zM7 9l4 6H4z" fill="none" stroke="#ccc" stroke-width="1.200"/><circle cx="12" cy="6" r="3" fill="none" stroke="#ccc" stroke-width="1.200"/></svg></button>
    </div>
    <div class="grp w48">
      <button aria-label="Clean screen"><svg class="i" viewBox="0 0 16 16"><path d="M1 2.500h14v11H1z" fill="none" stroke="#ddd" stroke-width="1.300"/><path d="M9 4.500h4v4zM3 8v4h4z" fill="#ddd"/><path d="M4 11l3-3M9 8l3-3" stroke="#ddd"/></svg></button>
      <button aria-label="Customization"><svg class="i" viewBox="0 0 16 16"><path d="M1 3h14M1 8h14M1 13h14" stroke="#ddd" stroke-width="1.800"/></svg></button>
    </div>
  </div>
  <div class="taskbar"><i></i><i></i><i></i></div>
</div>
</body>
</html>
```
FILE: styles.css
```css
* { box-sizing: border-box; }
body { margin: 0; background: #000; font-family: "Noto Sans", "Open Sans", sans-serif; font-size: 11px; line-height: 14px; color: #e6e6e6; }
button, input, select { font: inherit; color: inherit; background: none; border: 0; padding: 0; margin: 0; }
button { display: flex; align-items: center; justify-content: center; }
svg { display: block; flex: none; }
.defs { position: absolute; width: 0; height: 0; }
.app { min-height: 100vh; margin: 0 3px; display: flex; flex-direction: column; background: #4a4a4a; }
.i { width: 17px; height: 16px; }
.caret { width: 6px; height: 4px; }

.top { display: grid; grid-template-columns: 38px 1fr; grid-template-rows: 22px 20px; background: #666; }
.app-menu { grid-row: 1 / 3; height: 37px; margin-top: 1px; border: 1px solid #1c1c1c; background: linear-gradient(#b4b4b4, #8c8c8c 50%, #7c7c7c); }
.titlebar { display: flex; background: #fff; color: #222; }
.qat { display: flex; align-items: center; justify-content: space-between; width: 199px; padding: 0 3px 0 7px; background: linear-gradient(#8d8d8d, #686868); }
h1 { flex: 1; margin: 0; padding-right: 24px; text-align: right; font-size: 14px; line-height: 23px; font-weight: 400; white-space: nowrap; }
.info { display: flex; align-items: center; gap: 5px; width: 417px; margin-left: 1px; padding-right: 4px; background: linear-gradient(#8d8d8d, #686868); color: #eee; }
.info .expand { width: 12px; height: 22px; margin-right: -5px; background: #777; }
.search { width: 168px; height: 20px; padding: 0 2px; background: #777; border: 1px solid #4d4d4d; font-style: italic; }
.search::placeholder { color: #c8c8c8; opacity: 1; }
.signin { flex: 1; justify-content: start; gap: 5px; }
.rule { width: 1px; height: 18px; margin: 0 3px; background: #555; }
.window { display: flex; align-items: flex-start; width: 114px; padding-right: 3px; }
.window button { width: 24px; height: 18px; }
.window button:first-child { margin-left: 20px; }
.window .close { width: 42px; margin-left: auto; background: #ca5561; }

.tabs { display: flex; align-items: flex-end; gap: 1px; padding-left: 4px; border-bottom: 1px solid #444; color: #d8d8d8; }
.tabs button { height: 18px; padding: 0 8px; white-space: nowrap; }
.tabs .on { height: 19px; margin-right: 2px; border: 1px solid #454545; border-bottom: 0; background: linear-gradient(#848484, #6d6d6d); color: #fff; border-radius: 2px 2px 0 0; }
.tabs .minrib { padding-left: 16px; }

.ribbon { display: flex; min-height: 93px; padding-left: 1px; background: linear-gradient(#707070, #484848); border-bottom: 1px solid #8e8e8e; }
.panel { display: flex; flex-direction: column; background: #6c6c6c; border-right: 1px solid #505050; box-shadow: inset 1px 0 #777; }
.tools { flex: 1; display: flex; align-items: flex-start; padding-top: 4px; }
.panel footer { position: relative; display: flex; align-items: center; justify-content: center; gap: 6px; height: 18px; padding-bottom: 2px; background: linear-gradient(#606060, #555); }
.panel footer .caret { width: 8px; height: 5px; }
.launch { width: 6px; height: 6px; position: absolute; right: 4px; top: 6px; }
.big { flex-direction: column; justify-content: flex-start; text-align: center; }
.big > svg:first-child, .glyph { width: 32px; height: 32px; margin: 1px 0 3px; }
.big .caret { margin-top: 2px; }
.glyph { font-size: 34px; line-height: 32px; color: #f2f2f2; font-family: Lato, sans-serif; }
.small { display: grid; grid-auto-rows: 22px; align-items: center; justify-items: center; }
.two { grid-template-columns: 22px 11px; }
.one { grid-template-columns: 22px; }
.five { grid-template-columns: 28px 27px 27px 7px 36px; }
.draw { width: 210px; }
.draw .big:nth-child(-n+2) { width: 40px; }
.draw .big:nth-child(3) { width: 54px; }
.draw .big:nth-child(4) { width: 32px; }
.draw .two { margin-left: 4px; }
.modify { width: 125px; }
.annotation { width: 81px; }
.annotation .big { width: 44px; }
.layers { width: 256px; }
.layers .big { width: 58px; }
.stackcol { flex: 1; padding-right: 3px; }
.combo { display: flex; align-items: center; width: 100%; height: 20px; padding: 0 2px 0 11px; border: 1px solid #4a4a4a; background: linear-gradient(#686868, #7a7a7a); }
.combo.wide { gap: 2px; padding-left: 1px; margin: 1px 0 2px; }
.combo select { flex: 1; min-width: 0; height: 18px; padding-left: 2px; appearance: none; }
.combo .caret { width: 8px; height: 5px; }
.swatch { width: 14px; height: 14px; margin-right: 8px; background: #fff; border: 1px solid #555; }
.combo.wide .swatch { width: 13px; height: 13px; margin: 0; border-color: #222; }
.stroke { width: 57px; height: 1px; margin-left: -5px; background: #eee; }
.layericons { grid-template-columns: repeat(5, 1fr); width: 113px; }
.block { width: 75px; }
.block .big { width: 39px; }
.properties { width: 208px; }
.properties .big { width: 58px; }
.properties footer { padding-right: 12px; }
.proprows { flex: 1; grid-template-columns: 18px 1fr; padding-right: 2px; }
.groups { width: 64px; }
.groups .big { width: 39px; }
.active { width: 22px; height: 20px; background: #6389c4; border: 1px solid #384f78; }
.utilities { width: 91px; }
.utilities .big { width: 66px; }
.clipboard { width: 75px; }
.clipboard .big { width: 49px; }
.view { width: 57px; }
.view .big { width: 57px; }
.view footer { padding-right: 12px; }

.files { position: relative; display: flex; align-items: center; height: 27px; padding: 2px 0 0 29px; border-bottom: 4px solid #6b6b6b; background: #484848; }
.tabshape { position: absolute; left: -8px; bottom: 0; width: 176px; height: 22px; }
.files button { position: relative; }
.file { width: 70px; height: 20px; }
.fclose { width: 12px; margin-left: 15px; }
.fadd { width: 12px; margin-left: 19px; }

.work { flex: 1; display: flex; min-height: 530px; }
.canvas { position: relative; flex: 1; background: #31383d; }
.plan { position: absolute; inset: 0; width: 100%; height: 100%; }
.viewlabel { position: absolute; left: 3px; top: 6px; display: flex; }
.viewbtns { position: absolute; right: 10px; top: 8px; display: flex; gap: 8px; }
.command { position: absolute; left: 281px; right: 259px; bottom: 1px; display: flex; height: 24px; border: 1px solid #777; border-radius: 2px; }
.cmdtools { display: flex; align-items: center; gap: 8px; width: 50px; padding-left: 3px; background: linear-gradient(#777, #4c4c4c); }
.cmdfield { flex: 1; display: flex; align-items: center; gap: 6px; padding: 0 3px 0 4px; background: #c5caca; }
.cmdfield input { flex: 1; min-width: 0; color: #333; font-family: "Liberation Mono", monospace; font-style: italic; }
.cmdfield input::placeholder { color: #777b7c; opacity: 1; }
.linkedin { position: absolute; z-index: 1; left: 9px; bottom: -15px; display: flex; align-items: center; gap: 3px; font: 900 28px/30px Lato, sans-serif; color: #959a9c; }
.linkedin b { width: 31px; height: 30px; border-radius: 2px; background: #92979a; color: #3e4346; text-align: center; }
.lynda { position: absolute; z-index: 1; right: 0; bottom: -14px; font: 400 49px/54px Lato, sans-serif; color: #23292d; -webkit-text-stroke: 1px #666b6d; pointer-events: none; }
.lynda b { font-weight: 900; }
.scroll { display: flex; flex-direction: column; width: 16px; background: #f0f0f0; }
.scroll button { height: 17px; }
.track { flex: 1; display: flex; flex-direction: column; justify-content: flex-end; }
.thumb { height: 15px; background: #cdcdcd; }
.edge { width: 7px; background: #b9d9ec; border-right: 1px solid #111; }

.status { display: flex; justify-content: flex-end; height: 26px; padding-bottom: 1px; border-top: 1px solid #696969; background: #4a4a4a; }
.grp { display: flex; align-items: center; justify-content: space-around; border: 1px solid #858585; border-left-color: #4d4d4d; background: #616161; }
.grp .caret { width: 7px; height: 4px; }
.model { width: 48px; color: #fff; }
.w24 { width: 24px; } .w38 { width: 38px; } .w48 { width: 48px; } .w60 { width: 61px; } .w96 { width: 96px; } .w102 { width: 103px; }
.taskbar { display: flex; gap: 2px; height: 2px; padding-left: 107px; background: #a8a4ad; }
.taskbar i { width: 56px; background: #e6ebe6; }
```
